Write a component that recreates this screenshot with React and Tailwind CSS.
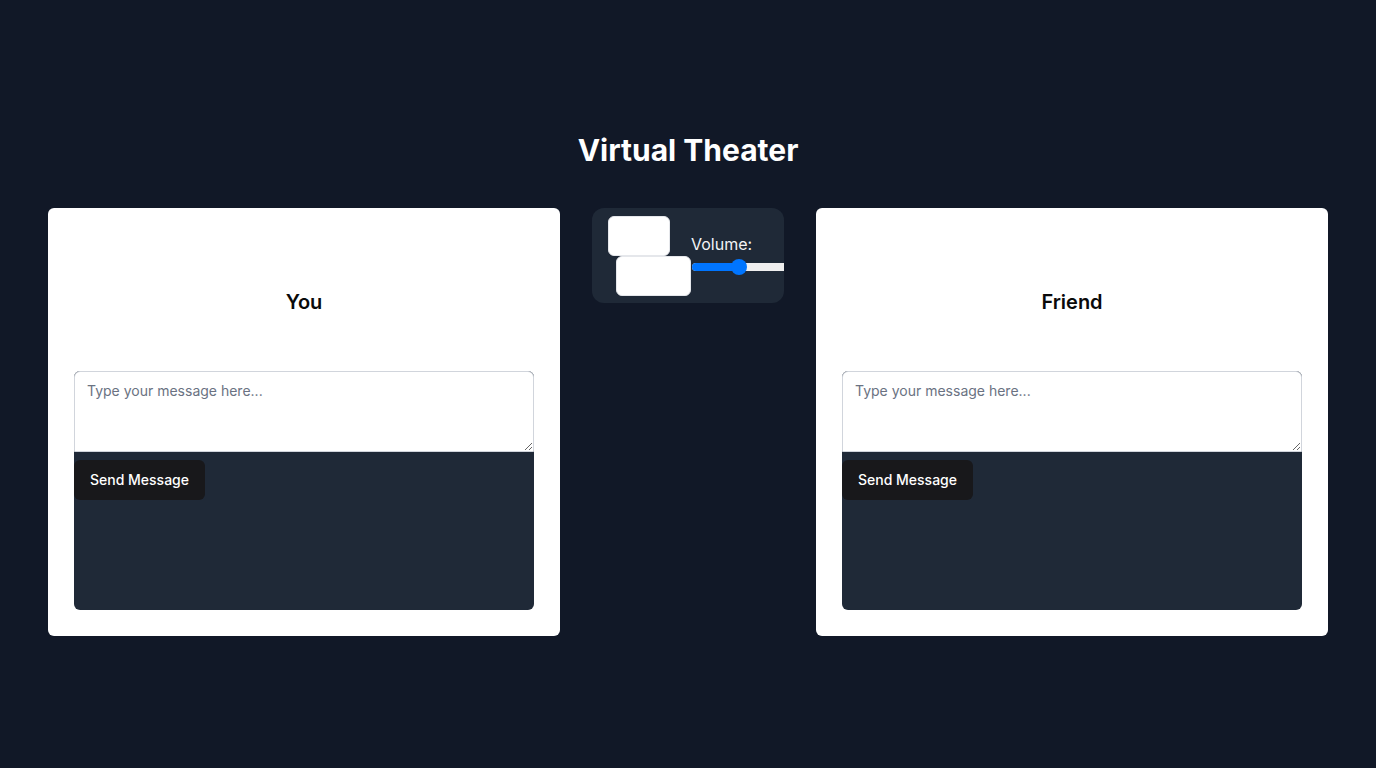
import React from "react";

function Card({ name }) {
  return (
    <div className="w-[512px] h-[428px] bg-white rounded-md p-[26px] flex flex-col">
      <div className="h-[137px] flex items-center justify-center pb-[2px]">
        <h2 className="text-xl font-semibold text-[#0a0a0a]">{name}</h2>
      </div>
      <div className="flex-1 bg-[#1f2937] rounded-md flex flex-col items-start">
        <textarea
          className="w-full h-[81px] block bg-white border border-gray-300 rounded-t-md px-3 pt-[9px] pb-2 text-sm text-gray-900 placeholder:text-gray-500 outline-none"
          placeholder="Type your message here..."
        />
        <button className="mt-2 h-10 px-4 rounded-md bg-[#18181b] text-white text-sm font-medium">
          Send Message
        </button>
      </div>
    </div>
  );
}

export default function App() {
  return (
    <div
      className="min-h-screen bg-[#111827] flex flex-col items-center justify-center"
      style={{ fontFamily: "Inter, 'Noto Sans', sans-serif" }}
    >
      <h1 className="text-3xl font-bold text-white mb-10">Virtual Theater</h1>
      <div className="flex gap-8 items-start">
        <Card name="You" />
        <div className="w-[192px] h-[95px] bg-[#1f2937] rounded-xl overflow-hidden pt-2 pl-4 flex">
          <div className="flex flex-col">
            <div className="w-[62px] h-10 bg-white rounded-md border border-gray-200" />
            <div className="ml-2 w-[75px] h-10 bg-white rounded-md border border-gray-200" />
          </div>
          <div className="flex flex-col pt-[18px]">
            <span className="text-base text-gray-100 leading-5">Volume:</span>
            <div className="relative mt-[9px] ml-px w-[129px] h-2 rounded-full bg-[#efefef]">
              <div className="absolute left-0 top-0 h-2 w-[48px] rounded-full bg-[#0075ff]" />
              <div className="absolute left-[39px] top-[-4px] w-4 h-4 rounded-full bg-[#0075ff]" />
            </div>
          </div>
        </div>
        <Card name="Friend" />
      </div>
    </div>
  );
}
